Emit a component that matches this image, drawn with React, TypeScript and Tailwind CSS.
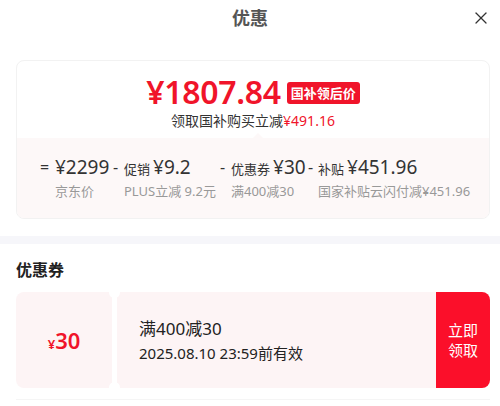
import { X } from 'lucide-react'

const font = { fontFamily: '"Noto Sans", "Noto Sans CJK SC", sans-serif' }

const breakdown = [
  { op: '=', opW: 'w-[15px]', groupW: 'w-[73px]', label: '', amount: '¥2299', note: '京东价' },
  { op: '-', opW: 'w-[11px]', groupW: 'w-[107px]', label: '促销', amount: '¥9.2', note: 'PLUS立减 9.2元' },
  { op: '-', opW: 'w-[11px]', groupW: 'w-[88px]', label: '优惠券', amount: '¥30', note: '满400减30' },
  { op: '-', opW: 'w-[10px]', groupW: 'flex-1', label: '补贴', amount: '¥451.96', note: '国家补贴云闪付减¥451.96' },
]

export default function App() {
  return (
    <div className="w-[500px] h-[406px] overflow-hidden bg-white text-[#1a1a1a]" style={font}>
      <header className="relative h-[36px] flex items-center justify-center">
        <h1 className="text-[18px] font-bold text-[#555]">优惠</h1>
        <X className="absolute right-[9px] top-[8px] w-[20px] h-[20px] text-[#333]" strokeWidth={1.5} />
      </header>

      <div className="pl-4 pr-[10px] pt-6">
        <div className="rounded-lg border border-[#f2f2f2] overflow-hidden">
          <div className="pt-[13px] pb-[7px] flex flex-col items-center">
            <div className="flex items-center gap-[6px] h-[36px]">
              <span className="text-[32px] leading-[36px] font-semibold text-[#f0142a] tracking-[-0.3px]">¥1807.84</span>
              <span className="bg-[#f0142a] text-white text-[13px] font-bold px-[4px] rounded-[3px] leading-[22px] mt-[2px]">
                国补领后价
              </span>
            </div>
            <p className="text-[14px] text-[#333] leading-[20px] mt-[1px]">
              领取国补购买立减<span className="text-[#f0142a]">¥491.16</span>
            </p>
          </div>
          <div className="relative bg-[#fdf8f8] pt-[15px] pb-[18px] pl-[23px]">
            <div className="absolute left-[236px] -top-[5px] w-0 h-0 border-x-[5px] border-x-transparent border-b-[5px] border-b-[#fdf8f8]" />
            <div className="flex">
              {breakdown.map((b, i) => (
                <div key={i} className={`flex ${b.groupW}`}>
                  <span className={`${b.opW} text-[16px] text-[#333] leading-[28px] shrink-0`}>{b.op}</span>
                  <div className="flex flex-col">
                    <div className="flex items-baseline gap-[3px] text-[#333] h-[28px] whitespace-nowrap">
                      {b.label && <span className="text-[13px]">{b.label}</span>}
                      <span className="text-[19px] leading-[28px]">{b.amount}</span>
                    </div>
                    <span className="text-[13px] text-[#999] whitespace-nowrap leading-[18px] mt-[1px]">{b.note}</span>
                  </div>
                </div>
              ))}
            </div>
          </div>
        </div>
      </div>

      <div className="h-[8px] bg-[#f6f6fa] mt-[17px]" />

      <div className="pl-4 pr-[10px]">
        <h2 className="text-[16px] font-bold text-[#222] pt-[14px] pb-[10px]">优惠券</h2>
        <div className="flex h-[96px]">
          <div className="relative w-[96px] bg-[#fdf4f5] rounded-l-lg flex items-center justify-center">
            <span className="text-[#f0142a] font-semibold">
              <span className="text-[13px]">¥</span>
              <span className="text-[22px]">30</span>
            </span>
          </div>
          <div className="relative w-[5px] bg-white">
            <div className="absolute -left-[3px] -top-[5px] w-[11px] h-[11px] rounded-full bg-white" />
            <div className="absolute -left-[3px] -bottom-[5px] w-[11px] h-[11px] rounded-full bg-white" />
          </div>
          <div className="flex-1 bg-[#fdf4f5] flex flex-col justify-center pl-[22px] gap-[1px]">
            <span className="text-[17px] leading-[24px] text-[#222]">满400减30</span>
            <span className="text-[15px] leading-[22px] text-[#222]">2025.08.10 23:59前有效</span>
          </div>
          <div className="w-[54px] bg-[#fb0f2a] rounded-r-lg flex items-center justify-center">
            <span className="text-white text-[15px] leading-[20px] text-center w-[32px]">立即领取</span>
          </div>
        </div>
        <div className="h-[12px] border-b border-[#f5f5f5]" />
      </div>
    </div>
  )
}
